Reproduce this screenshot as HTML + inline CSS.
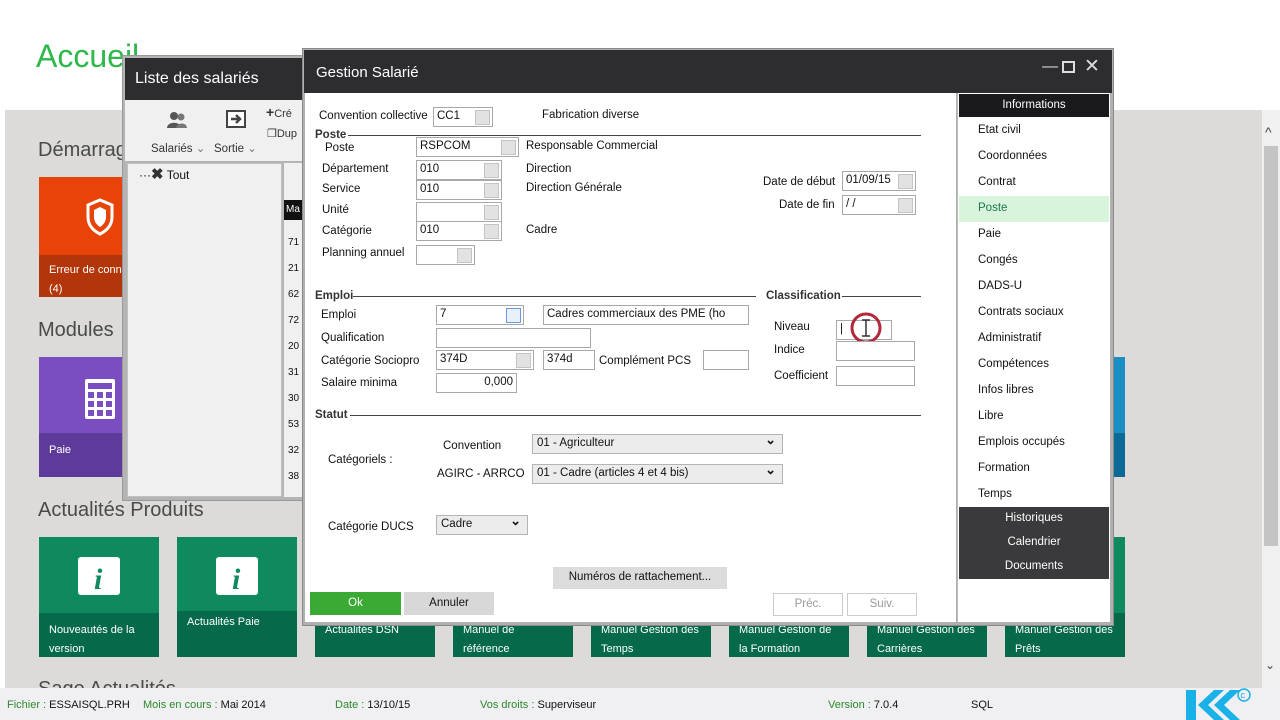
<!DOCTYPE html>
<html><head><meta charset="utf-8"><style>
*{margin:0;padding:0;box-sizing:border-box}
body{width:1280px;height:720px;overflow:hidden;background:#fff;font-family:"Liberation Sans",sans-serif;font-size:12px;color:#111;position:relative}
.a{position:absolute}
.h2{position:absolute;font-size:20px;color:#4a4a4a}
.tile{position:absolute;width:120px;height:120px}
.tile .b{position:absolute;left:0;right:0;bottom:0;height:44px;color:#fff;font-size:11px;padding:8px 10px;line-height:19px}
.g{background:#0e8a5e}.g .b{background:#06694a}
.lbl{position:absolute;font-size:11.5px;color:#111}
.inp{position:absolute;background:#fff;border:1px solid #a8a8a8;height:20px;font-size:11.5px;padding:2px 3px;color:#111}
.dot{position:absolute;top:2px;right:2px;width:15px;height:15px;background:#e2e2e2;border:1px solid #c4c4c4}
.sec{position:absolute;font-weight:bold;font-size:11.5px;color:#333}
.line{position:absolute;height:1px;background:#444}
.sel{position:absolute;background:#ececec;border:1px solid #b4b4b4;height:20px;font-size:11.5px;padding:2px 4px}
.sel:after{content:"⌄";position:absolute;right:6px;top:-3px;font-size:13px;font-weight:bold}
.nav{position:absolute;left:978px;font-size:11.5px;color:#111}
.dk{position:absolute;left:959px;width:150px;text-align:center;color:#fff;font-size:11.5px}
.st{position:absolute;top:699px;font-size:11px;color:#111}
.st span{color:#2b8a2b}
</style></head><body>
<div class="a" style="left:36px;top:38px;font-size:32px;color:#2db84a">Accueil</div>
<div class="a" style="left:5px;top:110px;width:1257px;height:578px;background:#dcdbd9"></div>
<div class="a" style="left:1262px;top:110px;width:18px;height:578px;background:#f0f0f0"></div>
<div class="a" style="left:1264px;top:146px;width:14px;height:400px;background:#c4c4c4"></div>
<div class="a" style="left:1265px;top:124px;font-size:14px;color:#444">^</div>
<div class="a" style="left:1265px;top:658px;font-size:12px;color:#444">⌄</div>
<div class="h2" style="left:38px;top:139px">Démarrage</div>
<div class="tile" style="left:39px;top:177px;background:#e8440a"><div class="b" style="background:#b3360a;height:42px;padding-top:6px">Erreur de conn<br>(4)</div>
<svg class="a" style="left:46px;top:20px" width="30" height="40" viewBox="0 0 30 40"><path d="M15 3 L27 8 V20 C27 29 21 34 15 37 C9 34 3 29 3 20 V8 Z" fill="none" stroke="#fff" stroke-width="3"/><path d="M15 10 L21 13 V20 C21 25 18 28 15 30 C12 28 9 25 9 20 V13 Z" fill="#fff"/></svg></div>
<div class="h2" style="left:38px;top:319px">Modules</div>
<div class="tile" style="left:39px;top:357px;background:#7a4ec0"><div class="b" style="background:#5e3a9a">Paie</div>
<svg class="a" style="left:44px;top:20px" width="34" height="44"><rect x="2" y="2" width="30" height="40" rx="2" fill="#fff"/><rect x="5" y="6" width="24" height="6" fill="#7a4ec0"/><g fill="#7a4ec0"><rect x="5" y="15" width="6" height="6"/><rect x="14" y="15" width="6" height="6"/><rect x="23" y="15" width="6" height="6"/><rect x="5" y="24" width="6" height="6"/><rect x="14" y="24" width="6" height="6"/><rect x="23" y="24" width="6" height="6"/><rect x="5" y="33" width="6" height="6"/><rect x="14" y="33" width="6" height="6"/><rect x="23" y="33" width="6" height="6"/></g></svg></div>
<div class="a" style="left:1110px;top:357px;width:15px;height:76px;background:#1a8fc4"></div>
<div class="a" style="left:1110px;top:433px;width:15px;height:44px;background:#0b6a96"></div>
<div class="h2" style="left:38px;top:499px">Actualités Produits</div>
<div class="tile g" style="left:39px;top:537px"><div class="b">Nouveautés de la<br>version</div></div>
<div class="tile g" style="left:177px;top:537px"><div class="b" style="height:46px;padding-top:2px">Actualités Paie</div></div>
<div class="tile g" style="left:315px;top:537px"><div class="b">Actualités DSN</div></div>
<div class="tile g" style="left:453px;top:537px"><div class="b">Manuel de<br>référence</div></div>
<div class="tile g" style="left:591px;top:537px"><div class="b">Manuel Gestion des<br>Temps</div></div>
<div class="tile g" style="left:729px;top:537px"><div class="b">Manuel Gestion de<br>la Formation</div></div>
<div class="tile g" style="left:867px;top:537px"><div class="b">Manuel Gestion des<br>Carrières</div></div>
<div class="tile g" style="left:1005px;top:537px"><div class="b">Manuel Gestion des<br>Prêts</div></div>
<svg class="a" style="left:78px;top:557px" width="42" height="38"><rect x="0" y="0" width="42" height="38" rx="3" fill="#fff"/><text x="16" y="32" font-family="Liberation Serif" font-style="italic" font-weight="bold" font-size="30" fill="#0e8a5e">i</text></svg>
<svg class="a" style="left:216px;top:557px" width="42" height="38"><rect x="0" y="0" width="42" height="38" rx="3" fill="#fff"/><text x="16" y="32" font-family="Liberation Serif" font-style="italic" font-weight="bold" font-size="30" fill="#0e8a5e">i</text></svg>
<div class="h2" style="left:38px;top:678px">Sage Actualités</div>
<!-- status bar -->
<div class="a" style="left:0;top:688px;width:1280px;height:32px;background:#f0f0f2"></div>
<div class="st" style="left:7px"><span>Fichier :</span> ESSAISQL.PRH</div>
<div class="st" style="left:143px"><span>Mois en cours :</span> Mai 2014</div>
<div class="st" style="left:335px"><span>Date :</span> 13/10/15</div>
<div class="st" style="left:480px"><span>Vos droits :</span> Superviseur</div>
<div class="st" style="left:828px"><span>Version :</span> 7.0.4</div>
<div class="st" style="left:971px">SQL</div>
<svg class="a" style="left:1184px;top:686px" width="70" height="34"><path d="M2 4 H12 V34 H2 Z M14 19 L30 4 H40 L24 19 L40 34 H30 Z M30 19 L46 4 H56 L40 19 L56 34 H46 Z" fill="#1ab0e8"/><circle cx="60" cy="9" r="6" fill="none" stroke="#1ab0e8" stroke-width="1.5"/><text x="56.5" y="12" font-size="9" fill="#1ab0e8">c</text></svg>
<!-- Liste des salariés -->
<div class="a" style="left:122px;top:55px;width:186px;height:446px;background:#b4b4b4;border:1px solid #999"></div>
<div class="a" style="left:125px;top:58px;width:183px;height:42px;background:#2d2c2e;color:#fff;font-size:16px;padding:12px 0 0 10px">Liste des salariés</div>
<div class="a" style="left:125px;top:100px;width:183px;height:61px;background:#f0f0f0"></div>
<svg class="a" style="left:166px;top:111px" width="22" height="18"><circle cx="8" cy="5" r="4" fill="#555"/><path d="M1 17 C1 10 15 10 15 17Z" fill="#555"/><circle cx="15" cy="6" r="3.5" fill="#777"/><path d="M10 17 C11 11 21 11 21 17Z" fill="#777"/></svg>
<svg class="a" style="left:226px;top:110px" width="20" height="18"><rect x="1" y="1" width="18" height="16" fill="#fff" stroke="#444" stroke-width="2"/><path d="M5 9 H12 M10 5 L14 9 L10 13" stroke="#444" stroke-width="2.5" fill="none"/></svg>
<div class="a" style="left:151px;top:141px;font-size:11.5px;color:#333">Salariés <span style="color:#777">⌄</span></div>
<div class="a" style="left:214px;top:141px;font-size:11.5px;color:#333">Sortie <span style="color:#777">⌄</span></div>
<div class="a" style="left:266px;top:104px;font-size:11px;color:#333"><b style="font-size:14px">+</b>Cré</div>
<div class="a" style="left:267px;top:127px;font-size:11px;color:#333">❐Dup</div>
<div class="a" style="left:127px;top:163px;width:155px;height:334px;background:#f0f0f0;border:1px solid #c0c0c0"></div>
<div class="a" style="left:139px;top:165px;font-size:12px;color:#111">···<b style="font-size:15px;color:#333">✖</b> Tout</div>
<div class="a" style="left:284px;top:163px;width:21px;height:334px;background:#f0f0f0"></div>
<div class="a" style="left:284px;top:200px;width:21px;height:20px;background:#111;color:#fff;font-size:10px;padding:4px 2px">Ma</div>
<div class="a" style="left:288px;top:230px;font-size:10px;line-height:26px">71<br>21<br>62<br>72<br>20<br>31<br>30<br>53<br>32<br>38</div>
<!-- Gestion Salarié -->
<div class="a" style="left:302px;top:48px;width:812px;height:578px;background:#b0b0b0;border:1px solid #8a8a8a"></div>
<div class="a" style="left:304px;top:50px;width:808px;height:43px;background:#2d2c2e;color:#fff;font-size:15px;padding:14px 0 0 12px">Gestion Salarié</div>
<div class="a" style="left:1042px;top:58px;color:#ddd;font-size:16px">—</div>
<div class="a" style="left:1062px;top:61px;width:13px;height:12px;border:2px solid #ddd"></div>
<div class="a" style="left:1084px;top:55px;color:#ddd;font-size:19px">✕</div>
<div class="a" style="left:305px;top:93px;width:651px;height:529px;background:#fff"></div>
<div class="a" style="left:957px;top:93px;width:153px;height:529px;background:#fff;border-left:1px solid #bbb"></div>
<div class="a" style="left:959px;top:94px;width:150px;height:23px;background:#1a1a1c;color:#fff;text-align:center;font-size:11.5px;padding-top:5px">Informations</div>
<div class="a" style="left:959px;top:196px;width:150px;height:26px;background:#d8f5dc"></div>
<div class="nav" style="top:124px">Etat civil</div>
<div class="nav" style="top:150px">Coordonnées</div>
<div class="nav" style="top:176px">Contrat</div>
<div class="nav" style="top:202px;color:#1a7a4a">Poste</div>
<div class="nav" style="top:228px">Paie</div>
<div class="nav" style="top:254px">Congés</div>
<div class="nav" style="top:280px">DADS-U</div>
<div class="nav" style="top:306px">Contrats sociaux</div>
<div class="nav" style="top:332px">Administratif</div>
<div class="nav" style="top:358px">Compétences</div>
<div class="nav" style="top:384px">Infos libres</div>
<div class="nav" style="top:410px">Libre</div>
<div class="nav" style="top:436px">Emplois occupés</div>
<div class="nav" style="top:462px">Formation</div>
<div class="nav" style="top:488px">Temps</div>
<div class="a" style="left:959px;top:507px;width:150px;height:72px;background:#3a393b"></div>
<div class="dk" style="top:512px">Historiques</div>
<div class="dk" style="top:536px">Calendrier</div>
<div class="dk" style="top:560px">Documents</div>
<!-- form -->
<div class="lbl" style="left:319px;top:110px">Convention collective</div>
<div class="inp" style="left:433px;top:107px;width:60px">CC1<div class="dot"></div></div>
<div class="lbl" style="left:542px;top:109px">Fabrication diverse</div>
<div class="sec" style="left:315px;top:129px">Poste</div><div class="line" style="left:348px;top:135px;width:573px"></div>
<div class="lbl" style="left:325px;top:142px">Poste</div>
<div class="inp" style="left:416px;top:137px;width:103px">RSPCOM<div class="dot"></div></div>
<div class="lbl" style="left:526px;top:140px">Responsable Commercial</div>
<div class="lbl" style="left:322px;top:163px">Département</div>
<div class="inp" style="left:416px;top:160px;width:86px">010<div class="dot"></div></div>
<div class="lbl" style="left:526px;top:163px">Direction</div>
<div class="lbl" style="left:322px;top:183px">Service</div>
<div class="inp" style="left:416px;top:180px;width:86px">010<div class="dot"></div></div>
<div class="lbl" style="left:526px;top:182px">Direction Générale</div>
<div class="lbl" style="left:322px;top:204px">Unité</div>
<div class="inp" style="left:416px;top:202px;width:86px"><div class="dot"></div></div>
<div class="lbl" style="left:322px;top:225px">Catégorie</div>
<div class="inp" style="left:416px;top:221px;width:86px">010<div class="dot"></div></div>
<div class="lbl" style="left:526px;top:224px">Cadre</div>
<div class="lbl" style="left:322px;top:247px">Planning annuel</div>
<div class="inp" style="left:416px;top:245px;width:59px"><div class="dot"></div></div>
<div class="lbl" style="left:763px;top:176px">Date de début</div>
<div class="inp" style="left:842px;top:171px;width:74px">01/09/15<div class="dot"></div></div>
<div class="lbl" style="left:779px;top:199px">Date de fin</div>
<div class="inp" style="left:842px;top:195px;width:74px"> / /<div class="dot"></div></div>
<div class="sec" style="left:315px;top:290px">Emploi</div><div class="line" style="left:353px;top:296px;width:403px"></div>
<div class="sec" style="left:766px;top:290px">Classification</div><div class="line" style="left:842px;top:296px;width:79px"></div>
<div class="lbl" style="left:321px;top:309px">Emploi</div>
<div class="inp" style="left:436px;top:305px;width:88px">7<div class="dot" style="border-color:#6a9ad8;background:#e8f0fa"></div></div>
<div class="inp" style="left:543px;top:305px;width:206px">Cadres commerciaux des PME (ho</div>
<div class="lbl" style="left:321px;top:332px">Qualification</div>
<div class="inp" style="left:436px;top:328px;width:155px"></div>
<div class="lbl" style="left:321px;top:355px">Catégorie Sociopro</div>
<div class="inp" style="left:436px;top:350px;width:98px">374D<div class="dot"></div></div>
<div class="inp" style="left:543px;top:350px;width:52px">374d</div>
<div class="lbl" style="left:599px;top:355px">Complément PCS</div>
<div class="inp" style="left:703px;top:350px;width:46px"></div>
<div class="lbl" style="left:321px;top:377px">Salaire minima</div>
<div class="inp" style="left:436px;top:373px;width:81px;text-align:right">0,000</div>
<div class="lbl" style="left:774px;top:321px">Niveau</div>
<div class="inp" style="left:836px;top:320px;width:56px">|</div>
<svg class="a" style="left:849px;top:311px" width="36" height="36"><circle cx="17" cy="17" r="14" fill="none" stroke="#b0283a" stroke-width="3"/><path d="M13 9 H21 M17 9 V25 M13 25 H21" stroke="#333" stroke-width="1.5"/></svg>
<div class="lbl" style="left:774px;top:344px">Indice</div>
<div class="inp" style="left:836px;top:341px;width:79px"></div>
<div class="lbl" style="left:774px;top:370px">Coefficient</div>
<div class="inp" style="left:836px;top:366px;width:79px"></div>
<div class="sec" style="left:315px;top:409px">Statut</div><div class="line" style="left:350px;top:415px;width:571px"></div>
<div class="lbl" style="left:443px;top:440px">Convention</div>
<div class="sel" style="left:532px;top:434px;width:251px">01 - Agriculteur</div>
<div class="lbl" style="left:328px;top:454px">Catégoriels :</div>
<div class="lbl" style="left:437px;top:468px">AGIRC - ARRCO</div>
<div class="sel" style="left:532px;top:464px;width:251px">01 - Cadre (articles 4 et 4 bis)</div>
<div class="lbl" style="left:328px;top:521px">Catégorie DUCS</div>
<div class="sel" style="left:436px;top:515px;width:92px">Cadre</div>
<div class="a" style="left:553px;top:567px;width:174px;height:22px;background:#dcdcdc;text-align:center;font-size:11.5px;padding-top:4px">Numéros de rattachement...</div>
<div class="a" style="left:310px;top:592px;width:91px;height:23px;background:#3aaa35;color:#fff;text-align:center;font-size:11.5px;padding-top:5px">Ok</div>
<div class="a" style="left:404px;top:592px;width:90px;height:23px;background:#d8d8d8;text-align:center;font-size:11.5px;padding-top:5px">Annuler</div>
<div class="a" style="left:773px;top:593px;width:70px;height:23px;border:1px solid #ccc;color:#999;text-align:center;font-size:11.5px;padding-top:4px">Préc.</div>
<div class="a" style="left:847px;top:593px;width:70px;height:23px;border:1px solid #ccc;color:#999;text-align:center;font-size:11.5px;padding-top:4px">Suiv.</div>
</body></html>
